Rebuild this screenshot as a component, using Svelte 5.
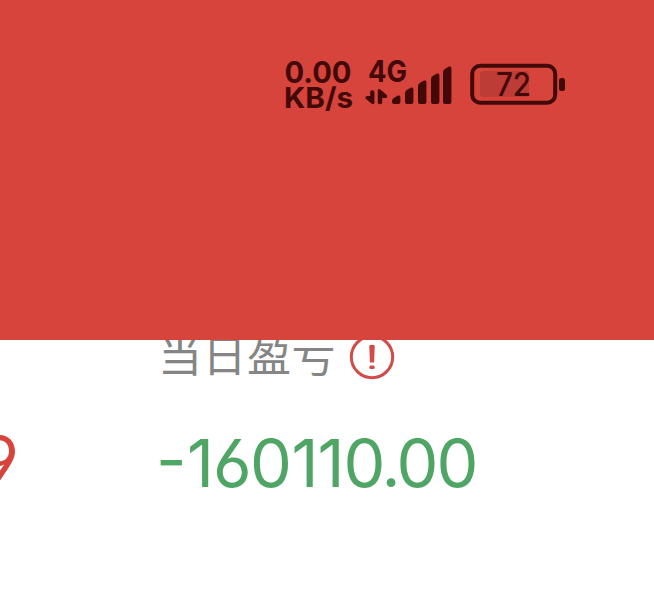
<script>
	export let networkSpeed = '0.00';
	export let speedUnit = 'KB/s';
	export let networkType = '4G';
	export let battery = 72;
	export let previousValue = '9';
	export let dailyProfit = '-160110.00';

	// left edge and height of each signal bar
	const signalBars = [
		{ x: 0, height: 9 },
		{ x: 13, height: 17 },
		{ x: 26, height: 24 },
		{ x: 39, height: 31 },
		{ x: 51, height: 38 }
	];

	const digitPositions = '156 187 213 250 291.5 317.5 343.5 381.5 396.5 436.5';
</script>

<div class="screen">
	<header class="header">
		<div class="status-bar">
			<div class="speed">
				<svg width="72" height="27" viewBox="0 0 72 27">
					<text x="0.5" y="26.3" textLength="67" lengthAdjust="spacingAndGlyphs">{networkSpeed}</text>
				</svg>
				<svg width="72" height="27" viewBox="0 0 72 27">
					<text class="unit" x="0" y="24" textLength="69" lengthAdjust="spacingAndGlyphs">{speedUnit}</text>
				</svg>
			</div>

			<svg class="signal" width="88" height="54" viewBox="0 0 88 54">
				<text x="2" y="24.5" textLength="39" lengthAdjust="spacingAndGlyphs">{networkType}</text>
				<path d="M4.2 34.5Q6.2 31.5 8.4 34.5V46Q7.5 48 5.5 46.6L0 42Q-1.5 39.5 1 39H4.2ZM11.8 33.5Q12 31.3 14 32.3L20.8 38Q22 40.5 19.8 41H16.2V46Q14 48.5 11.8 46Z" />
				{#each signalBars as bar}
					<path
						transform="translate({26 + bar.x} {47 - bar.height})"
						d="M0 {bar.height - 2}V6Q0 3.5 2.5 2.5L6 .6Q8.4 -.3 8.4 2.5V{bar.height - 2}Q8.4 {bar.height} 6.4 {bar.height}H2Q0 {bar.height} 0 {bar.height - 2}Z"
					/>
				{/each}
			</svg>

			<svg class="battery" width="96" height="54" viewBox="0 0 96 54">
				<rect class="level" x="10" y="14" width={battery * 0.68} height="26" rx="4" />
				<rect class="shell" x="2.2" y="8.7" width="83" height="37" rx="8" />
				<rect x="89" y="21" width="6" height="13" rx="2.5" />
				<text x="26" y="38.7" textLength="35" lengthAdjust="spacingAndGlyphs">{battery}</text>
			</svg>
		</div>
	</header>

	<main class="summary">
		<div class="previous">{previousValue}</div>
		<section class="profit">
			<div class="label-row">
				<span class="label">当日盈亏</span>
				<svg class="warning" width="46" height="46" viewBox="0 0 46 46">
					<circle cx="23" cy="23" r="20.7" />
					<path d="M20.3 12Q20.3 11 21.3 11H24.7Q25.7 11 25.7 12L25.1 28.5H20.9Z" />
					<rect x="20.3" y="31.5" width="5.4" height="3.5" rx="1.5" />
				</svg>
			</div>
			<svg class="amount" width="340" height="80" viewBox="158 420 340 80">
				<text x={digitPositions} y="486.5">{dailyProfit}</text>
			</svg>
		</section>
	</main>
</div>

<style>
	:global(body) {
		margin: 0;
		background: #fff;
	}

	.screen {
		width: 654px;
		height: 592px;
		overflow: hidden;
		background: #fff;
		font-family: Inter, 'Noto Sans CJK SC', sans-serif;
	}

	svg {
		display: block;
		flex-shrink: 0;
	}

	/* Header */
	.header {
		position: relative;
		z-index: 1;
		height: 340px;
		background: #d7443b;
	}

	.status-bar {
		display: flex;
		padding: 57px 0 0 284px;
		color: #430908;
	}

	.status-bar svg {
		fill: currentColor;
		overflow: visible;
	}

	.speed text,
	.signal text {
		font-size: 30px;
		font-weight: 650;
	}

	.speed .unit {
		font-size: 28.5px;
	}

	.signal {
		margin-left: 10px;
	}

	.battery {
		margin-left: 16px;
	}

	.battery .level {
		fill: #bd3c36;
	}

	.battery .shell {
		fill: none;
		stroke: currentColor;
		stroke-width: 4;
	}

	.battery text {
		font-size: 32px;
		font-weight: 500;
	}

	/* Summary */
	.summary {
		display: flex;
	}

	.previous {
		display: flex;
		flex-shrink: 0;
		justify-content: flex-end;
		width: 19px;
		margin: 81px 139px 0 0;
		color: #d7443b;
		font-size: 67px;
		line-height: 80px;
		font-feature-settings: 'cv04';
	}

	.label-row {
		display: flex;
		align-items: flex-start;
		height: 80px;
	}

	.label {
		margin: -17px 0 0;
		color: #858585;
		font-family: 'Noto Sans CJK SC', sans-serif;
		font-size: 44px;
		letter-spacing: 0.5px;
		line-height: 60px;
	}

	.warning {
		margin: -6px 0 0 13px;
		fill: #d34b49;
	}

	.warning circle {
		fill: none;
		stroke: #d34b49;
		stroke-width: 3;
	}

	.amount {
		overflow: visible;
		fill: #4ea564;
		font-size: 66.5px;
		font-feature-settings: 'cv03', 'case';
	}
</style>
